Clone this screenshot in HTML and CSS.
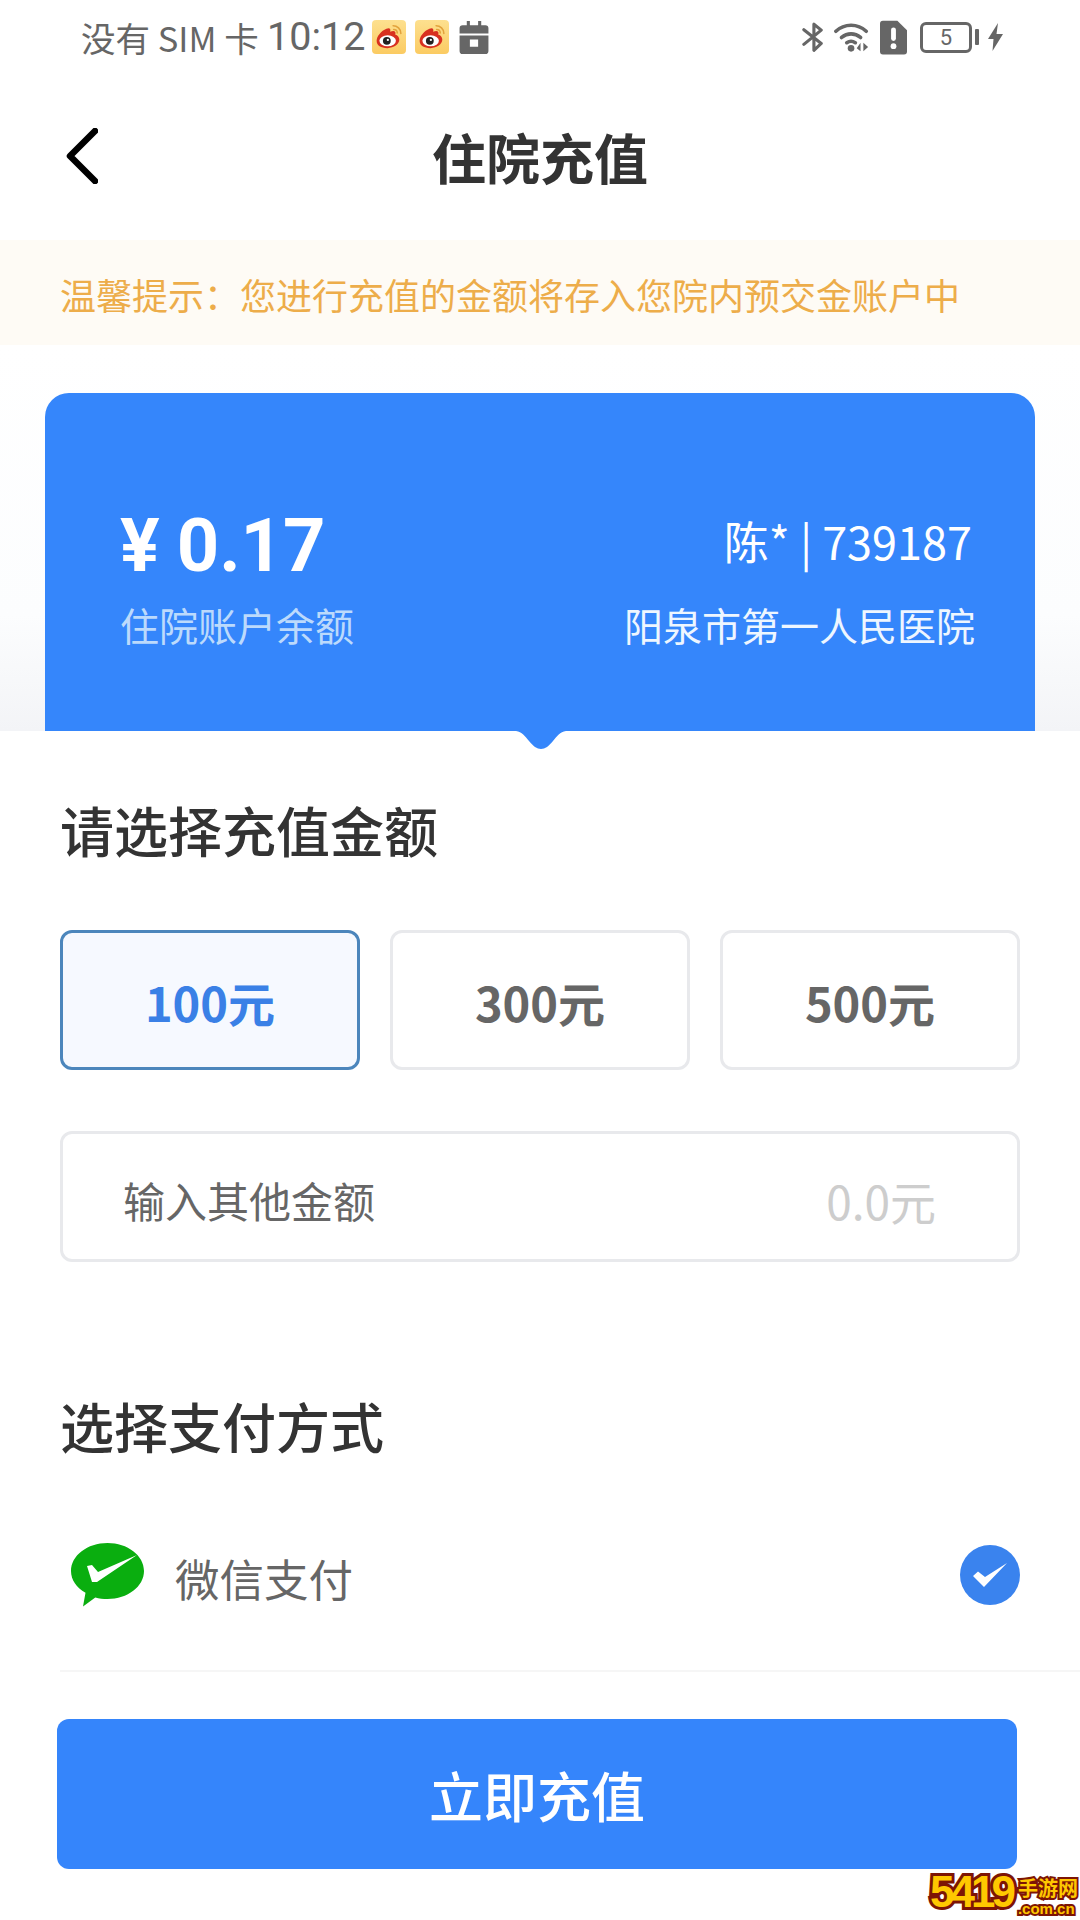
FILE: index.html
```html
<!DOCTYPE html>
<html lang="zh-CN">
<head>
  <meta charset="UTF-8" />
  <meta name="viewport" content="width=device-width, initial-scale=1.0" />
  <title>住院充值</title>
  <link rel="stylesheet" href="styles.css">
</head>
<body>
  <svg class="defs" width="0" height="0">
    <defs>
      <linearGradient id="weiboBg" x1="0" y1="0" x2="0" y2="1">
        <stop offset="0" stop-color="#fde08f" />
        <stop offset="1" stop-color="#fbcb62" />
      </linearGradient>
      <symbol id="weibo" viewBox="0 0 33 33">
        <rect width="33" height="33" rx="4" fill="url(#weiboBg)" />
        <path d="M14 8.500c3-1.500 4.500 0 3.600 2.800 3.200-1.300 5.200-.8 5.200 1.400 0 .9-.3 1.400-.3 1.400 2.600.8 4 2.600 4 4.900 0 4.500-5.200 8.300-11.500 8.300S4.500 25 4.500 20.200c0-4.200 4.500-9.800 9.500-11.700z" fill="#d8301f" />
        <ellipse cx="15.200" cy="20.200" rx="8" ry="5.300" fill="#fff" />
        <circle cx="14.400" cy="20.200" r="3.800" fill="#222" />
        <circle cx="15.400" cy="19.300" r="1.100" fill="#fff" />
        <path d="M20.500 5.500c4 0 7.500 3.200 7.500 7.500M21 9.200c2 0 3.500 1.500 3.500 3.500" fill="none" stroke="#e2a23c" stroke-width="1.500" stroke-linecap="round" />
      </symbol>
    </defs>
  </svg>

  <div class="status-bar">
    <div class="status-left">
      <span class="sim-text">没有 SIM 卡</span>
      <span class="clock">10:12</span>
      <svg class="app-icon"><use href="#weibo" /></svg>
      <svg class="app-icon"><use href="#weibo" /></svg>
      <svg class="calendar-icon" viewBox="0 0 28 32">
        <path d="M7 0h3v4h8V0h3v4h4a3 3 0 0 1 3 3v5H0V7a3 3 0 0 1 3-3h4zM0 14h28v15a3 3 0 0 1-3 3H3a3 3 0 0 1-3-3zm10 4v7h8v-7z" fill="#666" fill-rule="evenodd" />
      </svg>
    </div>
    <div class="status-right">
      <svg class="bt-icon" viewBox="0 0 24 34">
        <path d="M2 9l19 15-8 7.500V3l8 6.500L2 25" fill="none" stroke="#666" stroke-width="3.400" stroke-linecap="round" stroke-linejoin="round" />
      </svg>
      <svg class="wifi-icon" viewBox="0 0 38 32">
        <path d="M2 10c9-8.500 23-8.500 32 0M8 16.500c6-5 14-5 20 0M13.500 22c3-2 6-2 9 0" fill="none" stroke="#666" stroke-width="3.800" stroke-linecap="round" />
        <circle cx="18" cy="28" r="3.500" fill="#666" />
        <path d="M28 22v9l-4-3zM31 22v9l5-4.500z" fill="#666" />
      </svg>
      <svg class="sim-icon" viewBox="0 0 28 35">
        <path d="M3 0h15l10 10v22a3 3 0 0 1-3 3H3a3 3 0 0 1-3-3V3a3 3 0 0 1 3-3z" fill="#666" />
        <rect x="11.500" y="7" width="5" height="14" rx="2.500" fill="#fff" />
        <circle cx="14" cy="26.500" r="3" fill="#fff" />
      </svg>
      <div class="battery">
        <div class="battery-body">5</div>
        <div class="battery-cap"></div>
      </div>
      <svg class="bolt-icon" viewBox="0 0 15 28">
        <path d="M10 0L0 16h5.500L4.500 28 15 11H8.500z" fill="#666" />
      </svg>
    </div>
  </div>

  <div class="nav">
    <svg class="back-icon" viewBox="0 0 32 56">
      <path d="M29 3L4 28l25 25" fill="none" stroke="#000" stroke-width="6.500" stroke-linecap="round" stroke-linejoin="round" />
    </svg>
    <h1 class="nav-title">住院充值</h1>
  </div>

  <div class="notice">温馨提示：您进行充值的金额将存入您院内预交金账户中</div>

  <div class="account-area">
    <div class="account-card">
      <div class="balance-col">
        <div class="balance"><span class="yen">¥</span>0.17</div>
        <div class="balance-label">住院账户余额</div>
      </div>
      <div class="patient-col">
        <div class="patient-id">陈* | 739187</div>
        <div class="hospital">阳泉市第一人民医院</div>
      </div>
    </div>
  </div>

  <div class="panel">
    <svg class="notch" viewBox="0 0 50 18">
      <path d="M0 0h50c-6 1-9 5-13 10-4 5-8 8-12 8s-8-3-12-8C9 5 6 1 0 0z" fill="#3586fb" />
    </svg>

    <h2 class="section-title first">请选择充值金额</h2>
    <div class="amounts">
      <div class="amount active">100元</div>
      <div class="amount">300元</div>
      <div class="amount">500元</div>
    </div>
    <div class="other-amount">
      <span class="other-label">输入其他金额</span>
      <span class="other-value">0.0元</span>
    </div>

    <h2 class="section-title second">选择支付方式</h2>
    <div class="pay-row">
      <svg class="wechat-icon" viewBox="0 0 73 64">
        <path d="M36.500 0C56.600 0 73 12.500 73 28S56.600 56 36.500 56c-4.300 0-8.400-.6-12.200-1.600L12 63.500l2.500-13.800C5.500 44.600 0 36.800 0 28 0 12.500 16.400 0 36.500 0z" fill="#0aae0f" />
        <path d="M16 23l5-1 6 7L66 12 26 39h-5z" fill="#fff" />
      </svg>
      <span class="pay-name">微信支付</span>
      <svg class="check-icon" viewBox="0 0 60 60">
        <circle cx="30" cy="30" r="30" fill="#3a83ee" />
        <path d="M13 31l5-4.500 7 5.500L47 18 24 42z" fill="#fff" />
      </svg>
    </div>
    <button class="submit">立即充值</button>
  </div>

  <div class="watermark">
    <span class="wm-num">5419</span>
    <span class="wm-site">
      <span class="wm-cn">手游网</span>
      <span class="wm-dom">.com.cn</span>
    </span>
  </div>
</body>
</html>
```

FILE: styles.css
```css
* {
  box-sizing: border-box;
}
body {
  margin: 0;
  width: 1080px;
  height: 1920px;
  position: relative;
  overflow: hidden;
  background: #fff;
  color: #333;
  font-family: "Noto Sans CJK SC", "Noto Sans", sans-serif;
}
.defs {
  display: block;
  height: 0;
}

/* status bar */
.status-bar {
  height: 74px;
  padding: 0 77px 0 81px;
  display: flex;
  justify-content: space-between;
  align-items: center;
  color: #666;
}
.status-left {
  display: flex;
  align-items: center;
}
.sim-text {
  font-size: 34.500px;
  line-height: 40px;
  width: 186px;
  white-space: nowrap;
}
.clock {
  font-family: Roboto, sans-serif;
  font-size: 39.500px;
  line-height: 40px;
  width: 105px;
}
.app-icon {
  width: 34px;
  height: 34px;
  margin-right: 9px;
}
.calendar-icon {
  width: 30px;
  height: 33px;
  margin-left: 1px;
}
.status-right {
  display: flex;
  align-items: center;
}
.bt-icon {
  width: 22px;
  height: 34px;
  margin-right: 10px;
}
.wifi-icon {
  width: 36px;
  height: 32px;
  margin-right: 10px;
}
.sim-icon {
  width: 27px;
  height: 35px;
  margin-right: 13px;
}
.battery {
  display: flex;
  align-items: center;
  margin-right: 9px;
}
.battery-body {
  width: 52px;
  height: 31px;
  border: 3px solid #666;
  border-radius: 6px;
  font-family: Roboto, sans-serif;
  font-size: 22px;
  line-height: 25px;
  text-align: center;
}
.battery-cap {
  width: 4px;
  height: 16px;
  margin-left: 3px;
  background: #666;
  border-radius: 1px;
}
.bolt-icon {
  width: 15px;
  height: 28px;
}

/* title bar */
.nav {
  height: 166px;
  position: relative;
  display: flex;
  justify-content: center;
  align-items: center;
}
.back-icon {
  position: absolute;
  left: 66px;
  top: 54px;
  width: 32px;
  height: 56px;
}
.nav-title {
  margin: 0;
  font-size: 54px;
  line-height: 70px;
  font-weight: 700;
  color: #333;
}

.notice {
  height: 105px;
  padding: 3px 0 0 60px;
  background: #fefbf5;
  color: #edad4a;
  font-size: 36px;
  line-height: 102px;
  white-space: nowrap;
}

/* blue account card */
.account-area {
  height: 386px;
  padding: 48px 45px 0;
  background: linear-gradient(#fff 0%, #fcfdfe 70%, #f3f4f7 100%);
}
.account-card {
  height: 338px;
  padding: 110px 63px 0 75px;
  display: flex;
  justify-content: space-between;
  background: #3586fb;
  border-radius: 24px 24px 0 0;
  color: #fff;
}
.balance {
  font-family: Roboto, sans-serif;
  font-size: 74px;
  line-height: 86px;
  font-weight: 700;
  height: 86px;
}
.yen {
  margin-right: 17px;
}
.balance-label {
  margin-top: 10px;
  font-size: 39px;
  line-height: 50px;
  color: #bcdafc;
}
.patient-col {
  text-align: right;
  padding-top: 10px;
}
.patient-id {
  font-size: 45px;
  line-height: 56px;
  height: 56px;
  white-space: nowrap;
}
.hospital {
  margin-top: 30px;
  margin-right: -3px;
  font-size: 39px;
  line-height: 50px;
  color: #eef6ff;
  white-space: nowrap;
}

/* white sheet below the card */
.panel {
  position: relative;
  padding: 0 60px;
  background: #fff;
}
.notch {
  position: absolute;
  left: 516px;
  top: 0;
  width: 50px;
  height: 18px;
}
.section-title {
  margin: 0;
  font-size: 54px;
  line-height: 60px;
  font-weight: 500;
  color: #333;
}
.section-title.first {
  padding-top: 69px;
}
.section-title.second {
  margin-top: 134px;
}
.amounts {
  margin-top: 70px;
  display: flex;
  gap: 30px;
}
.amount {
  flex: 1;
  height: 140px;
  border: 3px solid #e8e9ec;
  border-radius: 12px;
  font-size: 47px;
  line-height: 138px;
  font-weight: 700;
  text-align: center;
  color: #666;
}
.amount.active {
  border-color: #4c86bc;
  background: #f6f9ff;
  color: #3a80e6;
}
.other-amount {
  margin-top: 61px;
  height: 131px;
  padding: 6px 81px 0 60px;
  display: flex;
  justify-content: space-between;
  align-items: center;
  border: 3px solid #e8e9ec;
  border-radius: 12px;
}
.other-label {
  font-size: 42px;
  color: #666;
}
.other-value {
  font-size: 46px;
  color: #cdcdcd;
}
.pay-row {
  margin: 81px -60px 0 0;
  padding: 0 60px 57px 11px;
  display: flex;
  align-items: center;
  border-bottom: 2px solid #f6f6f6;
}
.wechat-icon {
  width: 73px;
  height: 64px;
  margin-right: 31px;
}
.pay-name {
  flex: 1;
  font-size: 44.500px;
  line-height: 70px;
  color: #666;
  padding-top: 6px;
}
.check-icon {
  width: 60px;
  height: 60px;
}
.submit {
  display: block;
  width: 960px;
  height: 150px;
  margin: 47px 0 0 -3px;
  border: none;
  border-radius: 12px;
  background: #3585fb;
  color: #fff;
  font-family: inherit;
  font-size: 54px;
  font-weight: 500;
  cursor: pointer;
}

/* site stamp in the corner */
.watermark {
  position: absolute;
  right: 0;
  bottom: 2px;
  width: 150px;
  height: 52px;
  display: flex;
  align-items: flex-end;
  color: #ffc800;
  white-space: nowrap;
}
.wm-num {
  font-family: "Liberation Sans", sans-serif;
  font-weight: 700;
  font-size: 44px;
  line-height: 52px;
  letter-spacing: -4px;
  -webkit-text-stroke: 6px #7d1505;
  paint-order: stroke fill;
}
.wm-site {
  display: flex;
  flex-direction: column;
  margin-left: 6px;
  font-weight: 700;
  -webkit-text-stroke: 4px #7d1505;
  paint-order: stroke fill;
}
.wm-cn {
  font-size: 20px;
  line-height: 24px;
}
.wm-dom {
  font-family: "Liberation Sans", sans-serif;
  font-size: 15px;
  line-height: 18px;
}
```
